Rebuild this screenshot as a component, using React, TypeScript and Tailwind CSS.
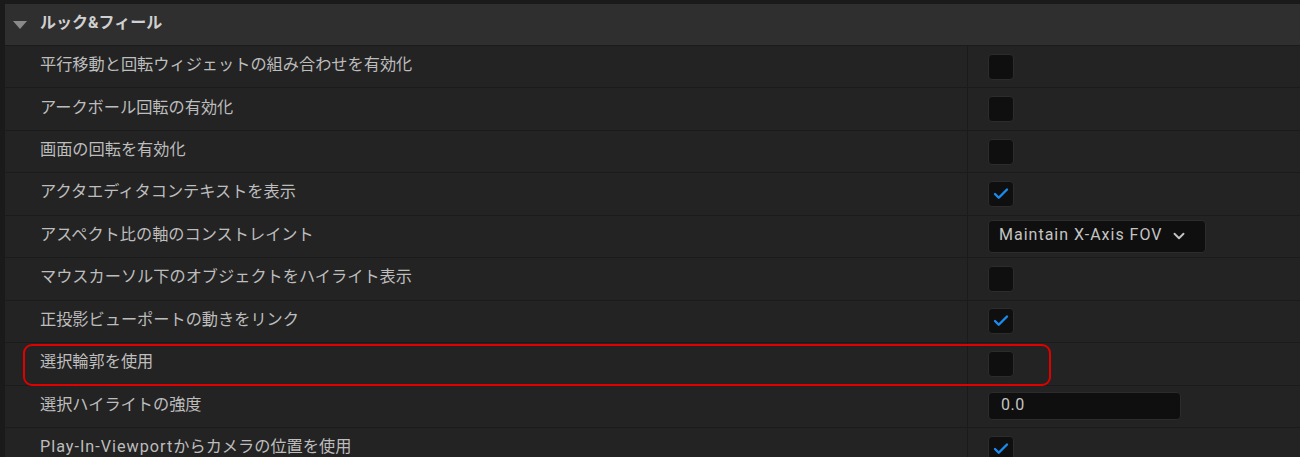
import { ChevronDown, Check } from "lucide-react";
import type { ReactNode } from "react";

type Ctl =
  | { kind: "check"; on: boolean }
  | { kind: "select"; value: string }
  | { kind: "number"; value: string };

const rows: { label: ReactNode; ctl: Ctl; marked?: boolean }[] = [
  { label: "平行移動と回転ウィジェットの組み合わせを有効化", ctl: { kind: "check", on: false } },
  { label: "アークボール回転の有効化", ctl: { kind: "check", on: false } },
  { label: "画面の回転を有効化", ctl: { kind: "check", on: false } },
  { label: "アクタエディタコンテキストを表示", ctl: { kind: "check", on: true } },
  { label: "アスペクト比の軸のコンストレイント", ctl: { kind: "select", value: "Maintain X-Axis FOV" } },
  { label: "マウスカーソル下のオブジェクトをハイライト表示", ctl: { kind: "check", on: false } },
  { label: "正投影ビューポートの動きをリンク", ctl: { kind: "check", on: true } },
  { label: "選択輪郭を使用", ctl: { kind: "check", on: false }, marked: true },
  { label: "選択ハイライトの強度", ctl: { kind: "number", value: "0.0" } },
  {
    label: (
      <>
        <span className="tracking-[1px]">Play-In-Viewport</span>からカメラの位置を使用
      </>
    ),
    ctl: { kind: "check", on: true },
  },
];

function Checkbox({ on }: { on: boolean }) {
  return (
    <div className="flex h-[26px] w-[26px] items-center justify-center rounded-[4px] border border-[#2c2c2c] bg-[#0f0f0f]">
      {on && <Check className="h-[18px] w-[18px] text-[#1a8cf0]" strokeWidth={3.2} />}
    </div>
  );
}

function Control({ ctl }: { ctl: Ctl }) {
  if (ctl.kind === "check") return <Checkbox on={ctl.on} />;
  if (ctl.kind === "select")
    return (
      <div className="flex h-[33px] w-[218px] items-center gap-[8px] rounded-[4px] border border-[#2c2c2c] bg-[#0f0f0f] pl-[10px] text-[16px] tracking-[1px] text-[#c4c4c4]">
        <span className="pb-[2px]">{ctl.value}</span>
        <ChevronDown className="h-[18px] w-[18px] text-[#c4c4c4]" strokeWidth={2.5} />
      </div>
    );
  return (
    <div className="flex h-[28px] w-[193px] items-center rounded-[4px] border border-[#2c2c2c] bg-[#0f0f0f] pb-[2px] pl-[12px] text-[16px] tracking-[0.5px] text-[#c4c4c4]">
      {ctl.value}
    </div>
  );
}

export default function App() {
  return (
    <div
      className="relative h-[457px] w-[1300px] overflow-hidden bg-[#1a1a1a]"
      style={{ fontFamily: 'Roboto, "Noto Sans CJK JP", sans-serif' }}
    >
      <div className="ml-[5px] pt-[4px]">
        <div className="flex h-[42px] items-center border-b border-[#1b1b1b] bg-[#2f2f2f] pl-[8px]">
          <svg width="14" height="8" viewBox="0 0 14 8" className="mr-[13px]">
            <path d="M0 0 L14 0 L7 8 Z" fill="#8a8a8a" />
          </svg>
          <span className="pb-[3px] text-[16px] font-bold text-[#d0d0d0]">ルック&amp;フィール</span>
        </div>
        {rows.map((r, i) => (
          <div key={i} className="relative flex h-[42.45px] border-b border-[#1b1b1b] bg-[#232323]">
            <div className="flex w-[963px] items-center border-r border-[#1b1b1b] pb-[3px] pl-[35px] text-[16.2px] text-[#bdbdbd]">
              <span>{r.label}</span>
            </div>
            <div className="flex flex-1 items-center pl-[20px]">
              <Control ctl={r.ctl} />
            </div>
            {r.marked && (
              <div className="absolute top-[1px] left-[18px] h-[42px] w-[1028px] rounded-[9px] border-2 border-[#e00000]" />
            )}
          </div>
        ))}
      </div>
    </div>
  );
}
